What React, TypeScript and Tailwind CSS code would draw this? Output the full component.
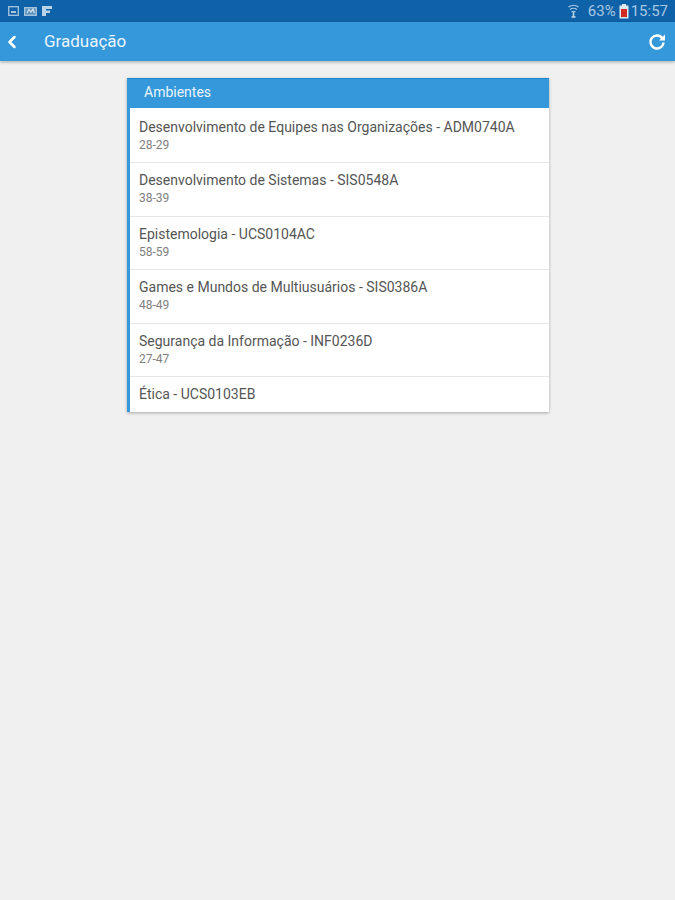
import { ChevronLeft } from 'lucide-react';

const items = [
  { name: 'Desenvolvimento de Equipes nas Organizações - ADM0740A', room: '28-29' },
  { name: 'Desenvolvimento de Sistemas - SIS0548A', room: '38-39' },
  { name: 'Epistemologia - UCS0104AC', room: '58-59' },
  { name: 'Games e Mundos de Multiusuários - SIS0386A', room: '48-49' },
  { name: 'Segurança da Informação - INF0236D', room: '27-47' },
  { name: 'Ética - UCS0103EB' },
];

const StatusIcons = () => (
  <div className="flex items-center gap-[5px]">
    <svg width="11" height="10" viewBox="0 0 11 10">
      <rect x="0.7" y="0.7" width="9.6" height="8.6" fill="none" stroke="#a9c6dd" strokeWidth="1.3" />
      <rect x="3" y="5" width="5" height="2" fill="#a9c6dd" />
    </svg>
    <svg width="13" height="10" viewBox="0 0 13 10">
      <rect x="0.7" y="1.7" width="11.6" height="7.6" fill="#5e93bd" stroke="#a9c6dd" strokeWidth="1.3" />
      <path d="M3 7 L5 3.5 L7 6 L9 3 L10.5 7" fill="none" stroke="#cfe0ee" strokeWidth="1.2" />
    </svg>
    <svg width="10" height="10" viewBox="0 0 10 10">
      <path d="M0 0 H10 V3 H4 V4.5 H8 V7 H4 V10 H0 Z" fill="#b9d2e5" />
    </svg>
  </div>
);

export default function App() {
  return (
    <div className="min-h-[900px] bg-[#f0f0f0] font-['Roboto',sans-serif]">
      {/* status bar */}
      <div className="h-[22px] bg-[#0f62a8] flex items-center justify-between pl-[8px] pr-[7px]">
        <StatusIcons />
        <div className="flex items-center text-[15px] leading-none text-[#a9c8e2]">
          <svg width="11" height="14" viewBox="0 0 11 14" className="mr-[9px]">
            <path d="M0.5 3 Q5.5 -0.5 10.5 3 M2 5.5 Q5.5 3 9 5.5 M3.5 8 Q5.5 6.5 7.5 8" fill="none" stroke="#a9c8e2" strokeWidth="1.2" />
            <path d="M5.5 8 V13 M3.5 13 H7.5" stroke="#c2d8e9" strokeWidth="1.5" />
          </svg>
          <span>63%</span>
          <svg width="10" height="15" viewBox="0 0 10 15" className="ml-[3px] mr-[2px]">
            <rect x="3" y="0" width="4" height="2" fill="#dfe9f2" />
            <rect x="0.5" y="1.5" width="9" height="13" fill="#dfe9f2" />
            <rect x="2" y="5" width="6" height="8" fill="#cf2b20" />
          </svg>
          <span>15:57</span>
        </div>
      </div>

      {/* toolbar */}
      <div className="h-[39px] bg-[#3498db] flex items-center shadow-[0_1px_3px_rgba(0,0,0,0.3)]">
        <ChevronLeft className="ml-[2px] text-white" size={20} strokeWidth={3} />
        <span className="ml-[22px] text-[17px] text-[#eaf5fc]">Graduação</span>
        <svg width="18" height="18" viewBox="0 0 18 18" className="ml-auto mr-[9px]">
          <path d="M14.5 5.5 A6.5 6.5 0 1 0 15.5 9.5" fill="none" stroke="white" strokeWidth="2.4" />
          <path d="M11 7.5 L17 7.5 L17 1.5 Z" fill="white" />
        </svg>
      </div>

      {/* card */}
      <div className="w-[422px] ml-[127px] mt-[17px] bg-white shadow-[0_1px_3px_rgba(0,0,0,0.3)] border-l-[3px] border-[#3498db]">
        <div className="h-[30px] -ml-[3px] bg-[#3498db] border-t border-[#1b87cf] flex items-center pl-[17px] pb-[3px] text-[14px] text-[#eaf5fc]">
          Ambientes
        </div>
        {items.map((item, i) => (
          <div
            key={item.name}
            className={`pl-[9px] flex flex-col justify-center ${!item.room ? 'h-[35px]' : i === 0 ? 'h-[55px] pt-[1px]' : 'h-[53.5px]'} ${i < items.length - 1 ? 'border-b border-[#e6e6e6]' : ''}`}
          >
            <div className="text-[14px] leading-[19px] text-[#555555]">{item.name}</div>
            {item.room && <div className="text-[12px] leading-[17px] text-[#808080]">{item.room}</div>}
          </div>
        ))}
      </div>
    </div>
  );
}
